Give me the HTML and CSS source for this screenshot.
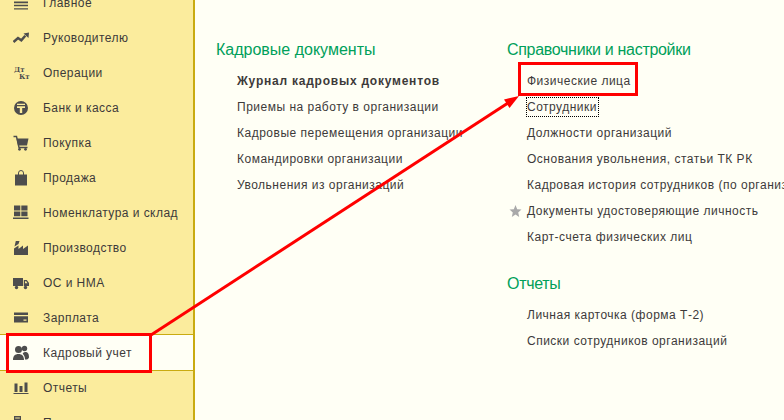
FILE: index.html
```html
<!DOCTYPE html>
<html lang="ru">
<head>
<meta charset="utf-8">
<title>Кадровый учет</title>
<link rel="stylesheet" href="styles.css">
</head>
<body>
<div class="app">
  <nav class="side">
    <div class="item"><svg class="ic" viewBox="0 0 16 16"><path d="M1 6.500h14v1.700H1zM1 9.800h14v1.500H1zM1 13.200h14v1.400H1z"/></svg><span>Главное</span></div>
    <div class="item"><svg class="ic" viewBox="0 0 16 16"><path d="M.5 12 5 8l3.300 2.300 4-4.600" fill="none" stroke="#4d4d4d" stroke-width="2.500"/><path d="M10.500 3.500 16 2.500 15.500 8z"/></svg><span>Руководителю</span></div>
    <div class="item"><span class="dtkt"><b>Дт</b><b class="kt">Кт</b></span><span>Операции</span></div>
    <div class="item"><svg class="ic" viewBox="0 0 16 16"><path fill-rule="evenodd" d="M8 1a7 7 0 1 1 0 14A7 7 0 0 1 8 1zM4 3.700v1.400h8V3.700zM4 6.200v1.800h2.800v5h2.400V8H12V6.200z"/></svg><span>Банк и касса</span></div>
    <div class="item"><svg class="ic" viewBox="0 0 16 16"><path d="M.5 1.500h3l2.500 11h8.500" fill="none" stroke="#4d4d4d" stroke-width="1.400"/><path d="M3.500 3.500h12L14 10.500H5z"/><circle cx="6.500" cy="14.300" r="1.400"/><circle cx="12.500" cy="14.300" r="1.400"/></svg><span>Покупка</span></div>
    <div class="item"><svg class="ic" viewBox="0 0 16 16"><path d="M2 4.500h12V15.500H2z"/><path d="M5.500 6V3a2.500 2.500 0 0 1 5 0V6" fill="none" stroke="#4d4d4d" stroke-width="1"/></svg><span>Продажа</span></div>
    <div class="item"><svg class="ic" viewBox="0 0 16 16"><path d="M1 .5h6.300v5H1zM8.300.5H14.500v5H8.300zM1 6.500h6.300v4.700H1zM8.300 6.500H14.500v4.700H8.300zM0 12.500h15.500V14H0z"/></svg><span>Номенклатура и склад</span></div>
    <div class="item"><svg class="ic" viewBox="0 0 16 16"><path d="M1 15V8.500L5.500 5.500V9L10 5.500V9L15 5.500V15zM1.500 6.500 2.800 1H6.500L5.500 4z"/></svg><span>Производство</span></div>
    <div class="item"><svg class="ic" viewBox="0 0 16 16"><path fill-rule="evenodd" d="M0 3h10v8H0zM10.800 5h3l2.200 3v3h-5.200zM12 6.200v2h2.500L13.200 6.200z"/><circle cx="3.500" cy="12.500" r="1.700"/><circle cx="12.500" cy="12.500" r="1.700"/></svg><span>ОС и НМА</span></div>
    <div class="item"><svg class="ic" viewBox="0 0 16 16"><path fill-rule="evenodd" d="M1 2.500h14v10H1zM1 5v1.300h14V5zM10.500 9.500v1.300h3V9.500z"/></svg><span>Зарплата</span></div>
    <div class="item active"><svg class="ic" viewBox="0 0 16 16"><circle cx="5.500" cy="4.500" r="3.500"/><circle cx="11.500" cy="3.500" r="2.700"/><path d="M0 15c0-4 2-6 5.500-6s5.500 2 5.500 6zM12 14.500c0-2.500-.8-4.300-2.300-5.700 .5-1 1.100-1.800 2.300-1.800 3 0 4 2 4 5 0 1-.5 1.800-2 2.500z"/></svg><span>Кадровый учет</span></div>
    <div class="item"><svg class="ic" viewBox="0 0 16 16"><path d="M1.500 3.500h3V12h-3zM6.500 6h3v6h-3zM11.500 2.500h3V12h-3zM.5 13h15v1H.5z"/></svg><span>Отчеты</span></div>
    <div class="item"><svg class="ic" viewBox="0 0 16 16"><path fill-rule="evenodd" d="M1 1h7v6H1zM2.200 2.500v1h4.600v-1zM9 5h6v4H9zM1 8.500h7V15H1zM9 10.500h6V15H9z"/></svg><span>Прочее</span></div>
  </nav>
  <main class="content">
    <section class="col col-left">
      <h2 class="head">Кадровые документы</h2>
      <ul class="links">
        <li class="strong">Журнал кадровых документов</li>
        <li>Приемы на работу в организации</li>
        <li>Кадровые перемещения организации</li>
        <li>Командировки организации</li>
        <li>Увольнения из организаций</li>
      </ul>
    </section>
    <section class="col col-right">
      <h2 class="head">Справочники и настройки</h2>
      <ul class="links">
        <li>Физические лица</li>
        <li><span class="focus">Сотрудники</span></li>
        <li>Должности организаций</li>
        <li>Основания увольнения, статьи ТК РК</li>
        <li>Кадровая история сотрудников (по организациям)</li>
        <li class="starred"><svg class="star" viewBox="0 0 12 12"><path d="M6 0l1.700 4.200L12 4.600 8.700 7.400 9.700 12 6 9.500 2.300 12l1-4.600L0 4.600l4.300-.4z"/></svg>Документы удостоверяющие личность</li>
        <li>Карт-счета физических лиц</li>
      </ul>
      <h2 class="head head-second">Отчеты</h2>
      <ul class="links">
        <li>Личная карточка (форма Т-2)</li>
        <li>Списки сотрудников организаций</li>
      </ul>
    </section>
  </main>
  <svg class="marks" width="784" height="420" viewBox="0 0 784 420">
    <rect x="7.500" y="334.500" width="143" height="37" class="box"/>
    <rect x="519.500" y="63.500" width="117" height="31" class="box"/>
    <line x1="151" y1="335" x2="508" y2="103" class="line"/>
    <path d="M519 96 504 99.500 509.500 108z" class="head-mark"/>
  </svg>
</div>
</body>
</html>
```
FILE: styles.css
```css
* { box-sizing: border-box; }
html, body { margin: 0; padding: 0; }
body {
  width: 784px;
  height: 420px;
  overflow: hidden;
  background: #fffff5;
  font-family: "Liberation Sans", Arial, sans-serif;
  font-size: 12px;
  color: #3d3a3a;
}
.app { position: relative; display: flex; width: 784px; height: 420px; overflow: hidden; }
.side {
  flex: 0 0 195px;
  height: 420px;
  background: #fbec9d;
  border-right: 2px solid #c9ab11;
  overflow: hidden;
}
.item {
  display: flex;
  align-items: center;
  height: 35px;
  padding-left: 13px;
  white-space: nowrap;
  letter-spacing: .45px;
}
.item:first-child { margin-top: -15px; }
.ic { flex: none; width: 16px; height: 16px; margin-right: 14px; fill: #4d4d4d; }
.dtkt {
  flex: none;
  display: flex;
  flex-direction: column;
  width: 16px;
  margin-right: 14px;
  padding-left: 1px;
  font: bold 7px/7px "DejaVu Serif", serif;
  letter-spacing: 0;
  color: #4d4d4d;
}
.dtkt b { display: block; }
.dtkt .kt { padding-left: 5px; }
.item.active {
  background: #fffff5;
  height: 37px;
  margin-top: -1px;
  border-top: 1px solid #c9ab11;
  border-bottom: 1px solid #c9ab11;
}
.item.active + .item { margin-top: -1px; }
.content { flex: 1; display: flex; padding: 41px 0 0 21px; min-width: 0; overflow: hidden; }
.col { flex: none; }
.col-left { width: 291px; }
.col-right { width: 300px; }
.head { margin: 0; font-size: 16px; line-height: 18px; font-weight: normal; color: #00a05a; }
.col-right .head { letter-spacing: -.3px; }
.head-second { margin-top: 25px; }
.links { list-style: none; margin: 9px 0 0; padding: 0 0 0 20px; white-space: nowrap; letter-spacing: .5px; }
.col-left .links { padding-left: 21px; }
.links li { position: relative; height: 26px; line-height: 26px; }
.links .strong { font-weight: bold; letter-spacing: .77px; }
.focus { outline: 1px dotted #000; outline-offset: 0; padding: 2px 1px 2px 0; }
.star { position: absolute; left: -18px; top: 7px; width: 13px; height: 12px; fill: #a9a9a9; }
.marks { position: absolute; left: 0; top: 0; pointer-events: none; }
.box { fill: none; stroke: #f00; stroke-width: 3; }
.line { stroke: #f00; stroke-width: 3; }
.head-mark { fill: #f00; }
```
